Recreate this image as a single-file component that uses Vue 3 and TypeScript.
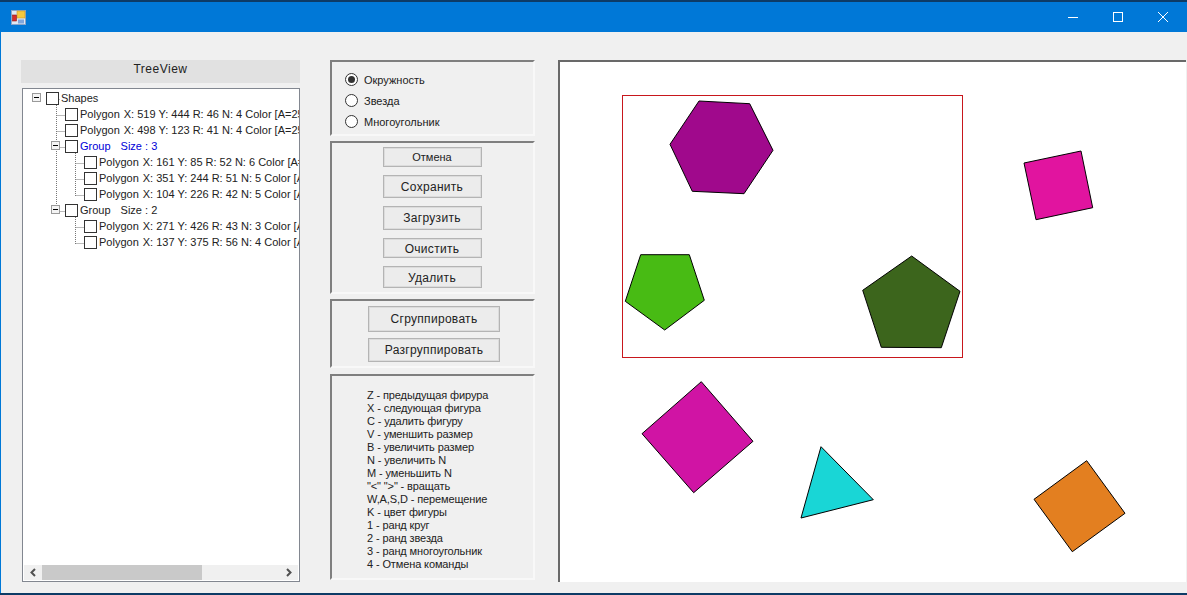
<script setup lang="ts">
interface TreeRow {
  level: number
  name: string
  info?: string
  expander?: boolean
  selected?: boolean
}

interface Shape {
  points: string
  color: string
}

const rows: TreeRow[] = [
  { level: 0, name: 'Shapes', expander: true },
  { level: 1, name: 'Polygon', info: 'X: 519 Y: 444 R: 46 N: 4 Color [A=255, R=227, G=127, B=32]' },
  { level: 1, name: 'Polygon', info: 'X: 498 Y: 123 R: 41 N: 4 Color [A=255, R=225, G=20, B=159]' },
  { level: 1, name: 'Group', info: 'Size : 3', expander: true, selected: true },
  { level: 2, name: 'Polygon', info: 'X: 161 Y: 85 R: 52 N: 6 Color [A=255, R=160, G=9, B=140]' },
  { level: 2, name: 'Polygon', info: 'X: 351 Y: 244 R: 51 N: 5 Color [A=255, R=60, G=101, B=28]' },
  { level: 2, name: 'Polygon', info: 'X: 104 Y: 226 R: 42 N: 5 Color [A=255, R=72, G=187, B=20]' },
  { level: 1, name: 'Group', info: 'Size : 2', expander: true },
  { level: 2, name: 'Polygon', info: 'X: 271 Y: 426 R: 43 N: 3 Color [A=255, R=25, G=214, B=214]' },
  { level: 2, name: 'Polygon', info: 'X: 137 Y: 375 R: 56 N: 4 Color [A=255, R=208, G=20, B=164]' }
]

const radios = ['Окружность', 'Звезда', 'Многоугольник']

const actions = [
  { label: 'Отмена', cls: 'a1' },
  { label: 'Сохранить', cls: 'a2' },
  { label: 'Загрузить', cls: 'a3' },
  { label: 'Очистить', cls: 'a4' },
  { label: 'Удалить', cls: 'a5' }
]

const help = [
  'Z - предыдущая фирура',
  'X - следующая фигура',
  'C - удалить фигуру',
  'V - уменшить размер',
  'B - увеличить размер',
  'N - увеличить N',
  'M - уменьшить N',
  '"<" ">" - вращать',
  'W,A,S,D - перемещение',
  'K - цвет фигуры',
  '1 - ранд круг',
  '2 - ранд звезда',
  '3 - ранд многоугольник',
  '4 - Отмена команды'
]

const shapes: Shape[] = [
  { points: '699,101 749.7,103.7 773,150.3 744,193.7 692.3,191.3 670,144.3', color: '#a0098c' },
  { points: '640.7,254.7 689.3,254.7 704.3,300.3 664.7,330 625.3,301.3', color: '#48bb14' },
  { points: '911.7,256 960,291.3 941.3,347.7 881.3,347.3 862.7,290.3', color: '#3c651c' },
  { points: '701.3,381.7 753,441.3 693.7,492.7 642,433.7', color: '#d014a4' },
  { points: '821,446.7 873.3,499.7 801,518', color: '#19d6d6' },
  { points: '1081,151 1092.7,207.7 1036,219.7 1024,163', color: '#e1149f' },
  { points: '1086.7,460.7 1125,513.3 1072.3,551.7 1034,499.3', color: '#e37f20' }
]
</script>

<template>
  <div class="window">
    <header class="titlebar">
      <svg class="app-icon" width="16" height="16" viewBox="0 0 16 16">
        <rect x="0.5" y="0.5" width="14" height="14" fill="#dfe8f4" stroke="#8aa4c8" />
        <rect x="6" y="1" width="8" height="7" fill="#f7c93e" stroke="#c9962a" stroke-width="0.6" />
        <rect x="1.5" y="5" width="4" height="6" fill="#d62b2b" stroke="#8c1c1c" stroke-width="0.6" />
        <rect x="7" y="9.5" width="6" height="4" fill="#7fa6dc" />
      </svg>
      <div class="controls">
        <svg width="10" height="10" viewBox="0 0 10 10"><path d="M0 5.5h10" stroke="#fff" fill="none" /></svg>
        <svg width="10" height="10" viewBox="0 0 10 10"><rect x="0.5" y="0.5" width="9" height="9" stroke="#fff" fill="none" /></svg>
        <svg width="10" height="10" viewBox="0 0 10 10"><path d="M0 0l10 10M10 0L0 10" stroke="#fff" fill="none" /></svg>
      </div>
    </header>

    <main class="content">
      <section class="left">
        <div class="tree-title">TreeView</div>
        <div class="tree">
          <svg class="tree-lines" width="80" height="170" viewBox="0 0 80 170">
            <path
              d="M33.5 10.5h3M33.5 26.5h9M33.5 42.5h9M33.5 58.5h9M33.5 122.5h9M52.5 74.5h9M52.5 90.5h9M52.5 106.5h9M52.5 138.5h9M52.5 154.5h9M33.5 16v102M52.5 64v43M52.5 128v27"
              stroke="#777"
              stroke-dasharray="1 1"
              fill="none"
            />
          </svg>
          <div class="rows">
            <div
              v-for="(row, i) in rows"
              :key="i"
              class="row"
              :class="['lv' + row.level, { selected: row.selected, group: row.name === 'Group' }]"
            >
              <span v-if="row.expander" class="expander"></span>
              <span class="check"></span>
              <span class="name">{{ row.name }}</span>
              <span v-if="row.info">{{ row.info }}</span>
            </div>
          </div>
          <div class="hscroll">
            <svg width="18" height="15" viewBox="0 0 18 15"><path d="M11 4L7.5 7.5L11 11" stroke="#505050" stroke-width="2" fill="none" /></svg>
            <div class="track"><div class="thumb"></div></div>
            <svg width="18" height="15" viewBox="0 0 18 15"><path d="M7 4L10.5 7.5L7 11" stroke="#505050" stroke-width="2" fill="none" /></svg>
          </div>
        </div>
      </section>

      <section class="middle">
        <div class="group-box radios">
          <label v-for="(r, i) in radios" :key="r" class="radio">
            <span class="dot" :class="{ on: i === 0 }"></span>{{ r }}
          </label>
        </div>

        <div class="group-box actions">
          <button v-for="a in actions" :key="a.label" class="btn" :class="a.cls">{{ a.label }}</button>
        </div>

        <div class="group-box grouping">
          <button class="btn wide tall">Сгруппировать</button>
          <button class="btn wide">Разгруппировать</button>
        </div>

        <div class="group-box help">
          <div v-for="line in help" :key="line">{{ line }}</div>
        </div>
      </section>

      <section class="canvas">
        <svg width="626" height="520" viewBox="560 62 626 520">
          <rect x="622.5" y="95.5" width="340" height="262" fill="none" stroke="#c8171d" shape-rendering="crispEdges" />
          <polygon v-for="s in shapes" :key="s.points" :points="s.points" :fill="s.color" stroke="#000" />
        </svg>
      </section>
    </main>
  </div>
</template>

<style>
html,
body {
  margin: 0;
  background: #0d3b66;
  overflow: hidden;
}
</style>

<style scoped>
.window {
  margin-top: 2px;
  height: 591px;
  width: 1187px;
  display: flex;
  flex-direction: column;
  box-sizing: border-box;
  border-left: 1px solid #0078d7;
  background: #f0f0f0;
  font-family: "Liberation Sans", Arial, sans-serif;
  font-size: 11px;
  color: #000;
}

.titlebar {
  height: 30px;
  flex: none;
  background: #0078d7;
  display: flex;
  align-items: center;
  justify-content: space-between;
  padding: 0 19px 0 10px;
}

.app-icon {
  margin-top: 1px;
}

.controls {
  display: flex;
  gap: 35px;
  margin-top: -1px;
}

.content {
  flex: 1;
  display: flex;
  padding: 28px 0 0 20px;
}

.left {
  width: 279px;
  flex: none;
  display: flex;
  flex-direction: column;
  gap: 5px;
}

.tree-title {
  height: 23px;
  background: #e1e1e1;
  text-align: center;
  font-size: 12px;
  letter-spacing: 0.5px;
  line-height: 18px;
  color: #222;
}

.tree {
  position: relative;
  height: 494px;
  margin-left: 1px;
  box-sizing: border-box;
  border: 1px solid #828790;
  background: #fff;
  display: flex;
  flex-direction: column;
  justify-content: space-between;
  overflow: hidden;
}

.tree-lines {
  position: absolute;
  left: 0;
  top: 0;
}

.rows {
  position: relative;
  padding-top: 1px;
}

.row {
  height: 16px;
  display: flex;
  align-items: center;
  white-space: pre;
  color: #222;
  position: relative;
}

.row.selected {
  color: #0000d8;
}

.row.lv0 { padding-left: 23px; }
.row.lv1 { padding-left: 42px; }
.row.lv2 { padding-left: 61px; }

.name {
  margin-right: 4px;
}

.row.group .name {
  margin-right: 10px;
}

.expander {
  position: absolute;
  width: 9px;
  height: 9px;
  box-sizing: border-box;
  border: 1px solid #9a9a9a;
  background: linear-gradient(#000, #000) center / 5px 1px no-repeat, #f4f4f4;
  top: 3px;
}

.row.lv0 .expander { left: 9px; }
.row.lv1 .expander { left: 28px; }

.check {
  width: 13px;
  height: 13px;
  box-sizing: border-box;
  border: 1px solid #333;
  background: #fff;
  flex: none;
  margin-right: 2px;
}

.hscroll {
  display: flex;
  align-items: center;
  height: 15px;
  margin: 0 1px 1px;
  background: #f0f0f0;
}

.track {
  flex: 1;
  height: 15px;
}

.thumb {
  width: 160px;
  height: 15px;
  background: #c9c9c9;
}

.middle {
  width: 205px;
  flex: none;
  margin-left: 30px;
  display: flex;
  flex-direction: column;
}

.group-box {
  box-sizing: border-box;
  border: 2px solid;
  border-color: #7f7f7f #f8f8f8 #f8f8f8 #7f7f7f;
}

.radios {
  height: 76px;
  padding: 11px 0 0 13px;
  display: flex;
  flex-direction: column;
  gap: 8px;
}

.radio {
  display: flex;
  align-items: center;
  height: 13px;
  gap: 6px;
  color: #222;
}

.dot {
  width: 13px;
  height: 13px;
  box-sizing: border-box;
  border-radius: 50%;
  border: 1px solid #333;
  background: #fff;
  position: relative;
}

.dot.on::after {
  content: "";
  position: absolute;
  left: 2px;
  top: 2px;
  width: 7px;
  height: 7px;
  border-radius: 50%;
  background: #333;
}

.actions {
  height: 153px;
  margin-top: 5px;
  padding-top: 4px;
  display: flex;
  flex-direction: column;
  align-items: center;
}

.btn {
  display: block;
  width: 99px;
  padding: 0;
  box-sizing: border-box;
  border: 1px solid #b4b4b4;
  background: #ececec;
  box-shadow: inset 0 0 0 1px #dcdcdc;
  font-family: inherit;
  color: #222;
  font-size: 11px;
  margin-right: 1px;
}

.a1 { height: 20px; }
.a2 { height: 23px; margin-top: 8px; font-size: 12px; letter-spacing: 0.3px; }
.a3 { height: 24px; margin-top: 8px; font-size: 12px; letter-spacing: 0.3px; }
.a4 { height: 20px; margin-top: 8px; font-size: 12px; letter-spacing: 0.3px; padding-top: 2px; }
.a5 { height: 22px; margin-top: 8px; font-size: 12px; letter-spacing: 0.3px; padding-top: 2px; }

.grouping {
  height: 69px;
  margin-top: 5px;
  padding-top: 5px;
  display: flex;
  flex-direction: column;
  align-items: center;
  gap: 6px;
}

.wide {
  width: 132px;
  height: 24px;
  margin: 0 0 0 3px;
  font-size: 12px;
  letter-spacing: 0.3px;
}

.tall {
  height: 26px;
}

.help {
  height: 206px;
  margin-top: 6px;
  padding: 13px 0 0 35px;
  line-height: 13px;
  color: #222;
  letter-spacing: -0.12px;
}

.canvas {
  width: 628px;
  height: 522px;
  flex: none;
  margin-left: 23px;
  box-sizing: border-box;
  border-top: 2px solid #696969;
  border-left: 2px solid #696969;
  background: #fff;
  display: flex;
}
</style>
